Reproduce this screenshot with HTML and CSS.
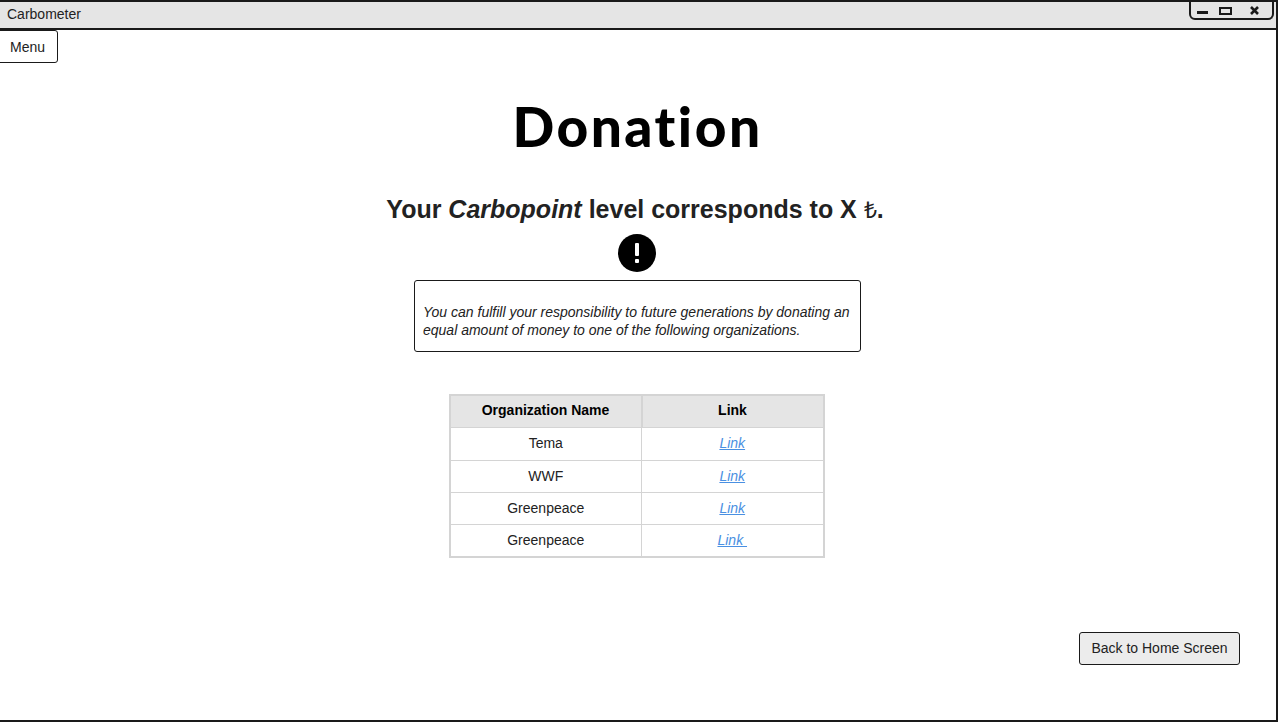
FILE: index.html
```html
<!DOCTYPE html>
<html lang="en">
<head>
    <meta charset="UTF-8">
    <meta name="viewport" content="width=device-width, initial-scale=1.0">
    <title>Carbometer - Donation</title>
    <link rel="stylesheet" href="styles.css">
</head>
<body>
    <div class="window">
        <div class="titlebar">Carbometer</div>
        <div class="controls">
            <svg width="85" height="20" viewBox="0 0 85 20">
                <rect x="8" y="11" width="11" height="3" fill="#1a1a1a"/>
                <rect x="31" y="8" width="11" height="6" fill="none" stroke="#1a1a1a" stroke-width="2"/>
                <path d="M62 7l7 7M69 7l-7 7" stroke="#1a1a1a" stroke-width="2.6" fill="none"/>
            </svg>
        </div>
        <div class="menu-row">
            <button class="btn menu-btn" type="button">Menu</button>
        </div>
        <div class="content">
            <h1>Donation</h1>
            <h2>Your <em>Carbopoint</em> level corresponds to X <span class="lira">₺</span>.</h2>
            <svg class="alert-icon" width="38" height="38" viewBox="0 0 38 38">
                <circle cx="19" cy="19" r="19" fill="#000"/>
                <rect x="17" y="9" width="4" height="13" rx="1" fill="#fff"/>
                <rect x="17" y="25" width="4" height="4" rx="1" fill="#fff"/>
            </svg>
            <div class="note">You can fulfill your responsibility to future generations by donating an equal amount of money to one of the following organizations.</div>
            <table>
                <tr>
                    <th class="name-col">Organization Name</th>
                    <th>Link</th>
                </tr>
                <tr class="tall">
                    <td>Tema</td>
                    <td><a href="#">Link</a></td>
                </tr>
                <tr>
                    <td>WWF</td>
                    <td><a href="#">Link</a></td>
                </tr>
                <tr>
                    <td>Greenpeace</td>
                    <td><a href="#">Link</a></td>
                </tr>
                <tr>
                    <td>Greenpeace</td>
                    <td><a href="#">Link&nbsp;</a></td>
                </tr>
            </table>
        </div>
        <div class="footer">
            <button class="btn back-btn" type="button">Back to Home Screen</button>
        </div>
    </div>
</body>
</html>
```

FILE: styles.css
```css
html, body {
    margin: 0;
    padding: 0;
    background-color: #ffffff;
}
body {
    font-family: "Liberation Sans", Arial, sans-serif;
    font-size: 14px;
    color: #222222;
}
.window {
    position: relative;
    box-sizing: border-box;
    width: 1278px;
    height: 722px;
    border: 2px solid #1a1a1a;
    border-left: none;
    display: flex;
    flex-direction: column;
    overflow: hidden;
}
.titlebar {
    height: 26px;
    line-height: 25px;
    padding-left: 7px;
    background-color: #e5e5e5;
    border-bottom: 2px solid #1a1a1a;
}
.controls {
    position: absolute;
    top: -2px;
    right: 2px;
    width: 85px;
    height: 20px;
    box-sizing: border-box;
    border: 2px solid #1a1a1a;
    border-top: none;
    border-radius: 0 0 6px 6px;
    background-color: #e5e5e5;
}
.controls svg {
    display: block;
    margin: 0 -2px;
}
.btn {
    font-family: inherit;
    font-size: 14px;
    color: #222222;
    border: 1px solid #1a1a1a;
    border-radius: 3px;
    padding: 0;
    height: 33px;
}
.menu-row {
    height: 34px;
}
.menu-btn {
    display: block;
    width: 61px;
    margin-left: -3px;
    background-color: #ffffff;
}
.content {
    display: flex;
    flex-direction: column;
    align-items: center;
    padding-right: 1px;
}
h1 {
    margin: 30px 0 0;
    height: 65px;
    line-height: 65px;
    font-family: Lato, sans-serif;
    font-size: 55px;
    font-weight: 900;
    letter-spacing: 2.5px;
    color: #000000;
}
h2 {
    margin: 35px 0 0 -5px;
    height: 30px;
    line-height: 30px;
    font-size: 25px;
    font-weight: bold;
}
.lira {
    font-size: 23px;
    font-weight: normal;
}
.alert-icon {
    display: block;
    margin: 10px 2px 0 0;
}
.note {
    box-sizing: border-box;
    width: 447px;
    height: 72px;
    margin-top: 8px;
    padding: 22px 8px 0;
    border: 1px solid #1a1a1a;
    border-radius: 3px;
    font-style: italic;
    line-height: 18px;
}
table {
    width: 376px;
    margin: 42px 2px 0 0;
    border-collapse: collapse;
    table-layout: fixed;
    border: 2px solid #d4d4d4;
}
th, td {
    padding: 0 0 2px;
    height: 29px;
    text-align: center;
    border: 1px solid #d4d4d4;
}
th {
    padding-bottom: 4px;
    height: 27px;
    background-color: #e5e5e5;
    color: #000000;
}
.tall td {
    height: 30px;
}
.name-col {
    width: 190px;
    border-right-width: 2px;
}
td a {
    color: #4a90e2;
    font-style: italic;
}
.footer {
    margin-top: auto;
    display: flex;
    justify-content: flex-end;
    padding: 0 36px 55px 0;
}
.back-btn {
    width: 161px;
    padding-bottom: 2px;
    background-color: #ececec;
}
```
